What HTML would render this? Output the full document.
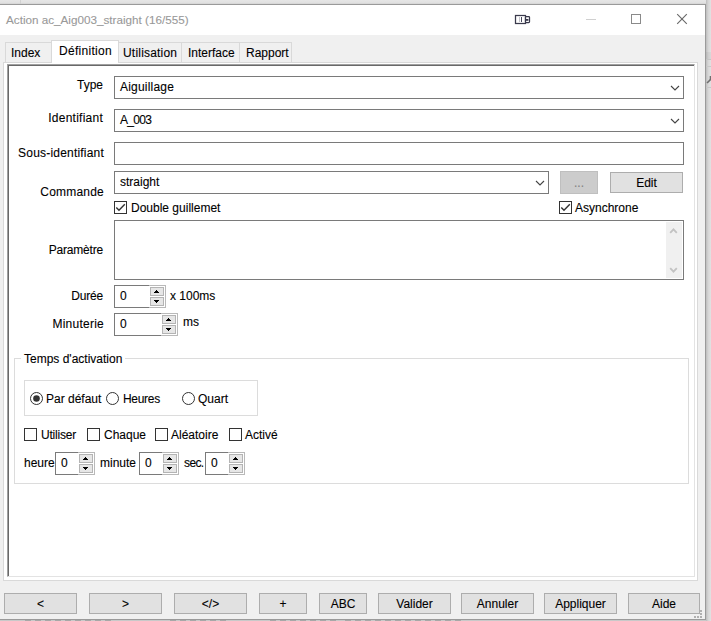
<!DOCTYPE html>
<html><head><meta charset="utf-8">
<style>
*{box-sizing:border-box;margin:0;padding:0}
html,body{width:711px;height:621px;overflow:hidden;background:#e6e6e6}
body{position:relative;font-family:"Liberation Sans",sans-serif;font-size:12px;color:#000}
.a{position:absolute}
.t{position:absolute;white-space:nowrap;line-height:14px;height:14px;-webkit-text-stroke:0.1px currentColor}
.r{text-align:right}
</style></head><body>
<div class="a" style="left:0;top:0;width:711px;height:4px;background:linear-gradient(to bottom,#e6e6e6,#e2e2e2 60%,#d4d4d4)"></div>
<div class="a" style="left:20px;top:0px;width:1px;height:4px;background:#d2d2d2;"></div>
<div class="a" style="left:706px;top:0;width:5px;height:621px;background:linear-gradient(to right,#bdbdbd,#d6d6d6 45%,#e2e2e2)"></div>
<div class="a" style="left:706px;top:52px;width:5px;height:7px;background:rgba(0,0,0,0.04);"></div>
<div class="a" style="left:706px;top:59px;width:5px;height:1px;background:#c4c4c4;"></div>
<div class="a" style="left:706px;top:66px;width:5px;height:1px;background:#c8c8c8;"></div>
<div class="a" style="left:706px;top:87px;width:5px;height:1px;background:#c8c8c8;"></div>
<svg class="a" style="left:706px;top:72px" width="5" height="13" viewBox="0 0 5 13"><path d="M1 11L5 7" stroke="#707070" stroke-width="1.6" fill="none"/><path d="M4.5 4V8" stroke="#707070" stroke-width="1.6"/></svg>
<div class="a" style="left:0px;top:620px;width:706px;height:1px;background:#c9c9c9;"></div>
<div class="a" style="left:25px;top:620px;width:6px;height:1px;background:#a8a8a8;"></div>
<div class="a" style="left:35px;top:620px;width:6px;height:1px;background:#a8a8a8;"></div>
<div class="a" style="left:45px;top:620px;width:6px;height:1px;background:#a8a8a8;"></div>
<div class="a" style="left:55px;top:620px;width:6px;height:1px;background:#a8a8a8;"></div>
<div class="a" style="left:65px;top:620px;width:6px;height:1px;background:#a8a8a8;"></div>
<div class="a" style="left:75px;top:620px;width:6px;height:1px;background:#a8a8a8;"></div>
<div class="a" style="left:85px;top:620px;width:6px;height:1px;background:#a8a8a8;"></div>
<div class="a" style="left:95px;top:620px;width:6px;height:1px;background:#a8a8a8;"></div>
<div class="a" style="left:105px;top:620px;width:6px;height:1px;background:#a8a8a8;"></div>
<div class="a" style="left:170px;top:620px;width:6px;height:1px;background:#a8a8a8;"></div>
<div class="a" style="left:180px;top:620px;width:6px;height:1px;background:#a8a8a8;"></div>
<div class="a" style="left:190px;top:620px;width:6px;height:1px;background:#a8a8a8;"></div>
<div class="a" style="left:200px;top:620px;width:6px;height:1px;background:#a8a8a8;"></div>
<div class="a" style="left:210px;top:620px;width:6px;height:1px;background:#a8a8a8;"></div>
<div class="a" style="left:220px;top:620px;width:6px;height:1px;background:#a8a8a8;"></div>
<div class="a" style="left:270px;top:620px;width:6px;height:1px;background:#a8a8a8;"></div>
<div class="a" style="left:280px;top:620px;width:6px;height:1px;background:#a8a8a8;"></div>
<div class="a" style="left:290px;top:620px;width:6px;height:1px;background:#a8a8a8;"></div>
<div class="a" style="left:300px;top:620px;width:6px;height:1px;background:#a8a8a8;"></div>
<div class="a" style="left:310px;top:620px;width:6px;height:1px;background:#a8a8a8;"></div>
<div class="a" style="left:320px;top:620px;width:6px;height:1px;background:#a8a8a8;"></div>
<div class="a" style="left:330px;top:620px;width:6px;height:1px;background:#a8a8a8;"></div>
<div class="a" style="left:345px;top:620px;width:6px;height:1px;background:#a8a8a8;"></div>
<div class="a" style="left:355px;top:620px;width:6px;height:1px;background:#a8a8a8;"></div>
<div class="a" style="left:365px;top:620px;width:6px;height:1px;background:#a8a8a8;"></div>
<div class="a" style="left:375px;top:620px;width:6px;height:1px;background:#a8a8a8;"></div>
<div class="a" style="left:385px;top:620px;width:6px;height:1px;background:#a8a8a8;"></div>
<div class="a" style="left:395px;top:620px;width:6px;height:1px;background:#a8a8a8;"></div>
<div class="a" style="left:405px;top:620px;width:6px;height:1px;background:#a8a8a8;"></div>
<div class="a" style="left:415px;top:620px;width:6px;height:1px;background:#a8a8a8;"></div>
<div class="a" style="left:425px;top:620px;width:6px;height:1px;background:#a8a8a8;"></div>
<div class="a" style="left:435px;top:620px;width:6px;height:1px;background:#a8a8a8;"></div>
<div class="a" style="left:445px;top:620px;width:6px;height:1px;background:#a8a8a8;"></div>
<div class="a" style="left:455px;top:620px;width:6px;height:1px;background:#a8a8a8;"></div>
<div class="a" style="left:0;top:4px;width:706px;height:616px;background:#f0f0f0;border-top:1px solid #9a9a9a;border-right:1px solid #9a9a9a;border-bottom:1px solid #9a9a9a"></div>
<div class="a" style="left:0px;top:5px;width:705px;height:30px;background:#fff;"></div>
<div class="t" style="left:6px;top:13px;color:#999;font-size:11.7px">Action ac_Aig003_straight (16/555)</div>
<svg class="a" style="left:512px;top:12px" width="22" height="14" viewBox="0 0 22 14">
 <rect x="3.5" y="3.5" width="10" height="8" fill="#fff" stroke="#3a3a4c" stroke-width="1.25"/>
 <line x1="7.5" y1="5" x2="7.5" y2="10" stroke="#c4c4cc" stroke-width="1"/>
 <line x1="9.5" y1="5" x2="9.5" y2="10" stroke="#4a4a5e" stroke-width="1"/>
 <rect x="13.5" y="4.5" width="4" height="6" rx="0.8" fill="#fff" stroke="#3a3a4c" stroke-width="1.25"/>
 <rect x="13" y="7" width="3.4" height="1.8" fill="#3a3a4c"/>
</svg>
<div class="a" style="left:586px;top:19px;width:10px;height:1px;background:#d0d0d0;"></div>
<div class="a" style="left:631px;top:14px;width:10px;height:10px;background:transparent;border:1px solid #8a8a8a;"></div>
<svg class="a" style="left:676px;top:13px" width="12" height="12" viewBox="0 0 12 12"><path d="M1.2 1.2L10.8 10.8M10.8 1.2L1.2 10.8" stroke="#6a6a6a" stroke-width="1.15" fill="none"/></svg>
<div class="a" style="left:5px;top:42px;width:47px;height:21px;background:#f0f0f0;border:1px solid #d9d9d9;border-bottom:none"></div>
<div class="t" style="left:11px;top:46px;letter-spacing:0px">Index</div>
<div class="a" style="left:118px;top:42px;width:64px;height:21px;background:#f0f0f0;border:1px solid #d9d9d9;border-bottom:none"></div>
<div class="t" style="left:123px;top:46px;letter-spacing:0.2px">Utilisation</div>
<div class="a" style="left:181px;top:42px;width:59px;height:21px;background:#f0f0f0;border:1px solid #d9d9d9;border-bottom:none"></div>
<div class="t" style="left:188px;top:46px;letter-spacing:0px">Interface</div>
<div class="a" style="left:239px;top:42px;width:53px;height:21px;background:#f0f0f0;border:1px solid #d9d9d9;border-bottom:none"></div>
<div class="t" style="left:246px;top:46px;letter-spacing:0px">Rapport</div>
<div class="a" style="left:3px;top:62px;width:695px;height:519px;background:#fff;border:1px solid #d9d9d9;"></div>
<div class="a" style="left:51px;top:40px;width:68px;height:23px;background:#fff;border:1px solid #d9d9d9;border-bottom:none"></div>
<div class="a" style="left:52px;top:62px;width:66px;height:2px;background:#fff;"></div>
<div class="t" style="left:59px;top:44px;letter-spacing:0.3px">Définition</div>
<div class="a" style="left:7px;top:64px;width:688px;height:513px;background:#fff;border-top:1px solid #a0a0a0;border-left:1px solid #a0a0a0;border-right:1px solid #e3e3e3;border-bottom:1px solid #e3e3e3;box-shadow:inset 1px 1px 0 #696969"></div>
<div class="t r" style="left:0;width:103px;top:78px;">Type</div>
<div class="t r" style="left:0;width:103px;top:111px;letter-spacing:0.25px">Identifiant</div>
<div class="t r" style="left:0;width:104px;top:146px;letter-spacing:0.2px">Sous-identifiant</div>
<div class="t r" style="left:0;width:104px;top:185px;letter-spacing:0.2px">Commande</div>
<div class="t r" style="left:0;width:103px;top:243px;letter-spacing:-0.2px">Paramètre</div>
<div class="t r" style="left:0;width:103px;top:289px;letter-spacing:-0.2px">Durée</div>
<div class="t r" style="left:0;width:104px;top:317px;letter-spacing:0.25px">Minuterie</div>
<div class="a" style="left:114px;top:76px;width:570px;height:23px;background:#fff;border:1px solid #7a7a7a;"></div>
<div class="t" style="left:120px;top:80px;letter-spacing:0.2px">Aiguillage</div>
<svg class="a" style="left:670px;top:85px" width="10" height="6" viewBox="0 0 10 6"><path d="M1 1L5 5L9 1" stroke="#444" stroke-width="1.1" fill="none"/></svg>
<div class="a" style="left:114px;top:109px;width:570px;height:23px;background:#fff;border:1px solid #7a7a7a;"></div>
<div class="t" style="left:120px;top:113px;letter-spacing:-0.7px">A_003</div>
<svg class="a" style="left:670px;top:118px" width="10" height="6" viewBox="0 0 10 6"><path d="M1 1L5 5L9 1" stroke="#444" stroke-width="1.1" fill="none"/></svg>
<div class="a" style="left:114px;top:142px;width:570px;height:23px;background:#fff;border:1px solid #7a7a7a;"></div>
<div class="a" style="left:114px;top:171px;width:435px;height:23px;background:#fff;border:1px solid #7a7a7a;"></div>
<div class="t" style="left:120px;top:175px;">straight</div>
<svg class="a" style="left:535px;top:180px" width="10" height="6" viewBox="0 0 10 6"><path d="M1 1L5 5L9 1" stroke="#444" stroke-width="1.1" fill="none"/></svg>
<div class="a" style="left:560px;top:171px;width:38px;height:23px;background:#cccccc;border:1px solid #bfbfbf;"></div>
<div class="t" style="left:560px;width:38px;text-align:center;top:176px;color:#838383">...</div>
<div class="a" style="left:610px;top:172px;width:73px;height:21px;background:#e1e1e1;border:1px solid #adadad;"></div>
<div class="t" style="left:610px;width:73px;text-align:center;top:176px;color:#000">Edit</div>
<div class="a" style="left:114px;top:201px;width:13px;height:13px;background:#fff;border:1px solid #333;"></div>
<svg class="a" style="left:114px;top:201px" width="13" height="13" viewBox="0 0 13 13"><path d="M2.3 6.4L5 9.2L10.8 3.3" stroke="#333" stroke-width="1.4" fill="none"/></svg>
<div class="t" style="left:131px;top:201px;">Double guillemet</div>
<div class="a" style="left:559px;top:201px;width:13px;height:13px;background:#fff;border:1px solid #333;"></div>
<svg class="a" style="left:559px;top:201px" width="13" height="13" viewBox="0 0 13 13"><path d="M2.3 6.4L5 9.2L10.8 3.3" stroke="#333" stroke-width="1.4" fill="none"/></svg>
<div class="t" style="left:575px;top:201px;">Asynchrone</div>
<div class="a" style="left:114px;top:220px;width:570px;height:60px;background:#fff;border:1px solid #7a7a7a;"></div>
<div class="a" style="left:666px;top:222px;width:16px;height:56px;background:#f0f0f0;"></div>
<svg class="a" style="left:669px;top:227px" width="9" height="8" viewBox="0 0 9 8"><path d="M1.2 5.8L4.5 2.4L7.8 5.8" stroke="#c2c2c2" stroke-width="1.8" fill="none"/></svg>
<svg class="a" style="left:669px;top:266px" width="9" height="8" viewBox="0 0 9 8"><path d="M1.2 2.2L4.5 5.6L7.8 2.2" stroke="#c2c2c2" stroke-width="1.8" fill="none"/></svg>
<div class="a" style="left:114px;top:285px;width:52px;height:23px;background:#fff;border:1px solid #b9b9b9"></div>
<div class="a" style="left:114px;top:285px;width:35px;height:1px;background:#7a7a7a"></div>
<div class="a" style="left:114px;top:307px;width:35px;height:1px;background:#7a7a7a"></div>
<div class="a" style="left:114px;top:285px;width:1px;height:23px;background:#7a7a7a"></div>
<div class="a" style="left:150px;top:287px;width:14px;height:9px;background:#e6e6e6;border:1px solid #b4b4b4"></div>
<div class="a" style="left:156px;top:290px;width:1px;height:1px;background:#000"></div>
<div class="a" style="left:155px;top:291px;width:3px;height:1px;background:#000"></div>
<div class="a" style="left:154px;top:292px;width:5px;height:1px;background:#000"></div>
<div class="a" style="left:150px;top:297px;width:14px;height:9px;background:#e6e6e6;border:1px solid #b4b4b4"></div>
<div class="a" style="left:154px;top:300px;width:5px;height:1px;background:#000"></div>
<div class="a" style="left:155px;top:301px;width:3px;height:1px;background:#000"></div>
<div class="a" style="left:156px;top:302px;width:1px;height:1px;background:#000"></div>
<div class="t" style="left:120px;top:289px">0</div>
<div class="t" style="left:170px;top:289px;">x 100ms</div>
<div class="a" style="left:114px;top:313px;width:64px;height:23px;background:#fff;border:1px solid #b9b9b9"></div>
<div class="a" style="left:114px;top:313px;width:47px;height:1px;background:#7a7a7a"></div>
<div class="a" style="left:114px;top:335px;width:47px;height:1px;background:#7a7a7a"></div>
<div class="a" style="left:114px;top:313px;width:1px;height:23px;background:#7a7a7a"></div>
<div class="a" style="left:162px;top:315px;width:14px;height:9px;background:#e6e6e6;border:1px solid #b4b4b4"></div>
<div class="a" style="left:168px;top:318px;width:1px;height:1px;background:#000"></div>
<div class="a" style="left:167px;top:319px;width:3px;height:1px;background:#000"></div>
<div class="a" style="left:166px;top:320px;width:5px;height:1px;background:#000"></div>
<div class="a" style="left:162px;top:325px;width:14px;height:9px;background:#e6e6e6;border:1px solid #b4b4b4"></div>
<div class="a" style="left:166px;top:328px;width:5px;height:1px;background:#000"></div>
<div class="a" style="left:167px;top:329px;width:3px;height:1px;background:#000"></div>
<div class="a" style="left:168px;top:330px;width:1px;height:1px;background:#000"></div>
<div class="t" style="left:120px;top:317px">0</div>
<div class="t" style="left:183px;top:315px;">ms</div>
<div class="a" style="left:14px;top:358px;width:675px;height:126px;background:transparent;border:1px solid #dcdcdc;"></div>
<div class="t" style="left:21px;top:352px;background:#fff;padding:0 3px">Temps d'activation</div>
<div class="a" style="left:24px;top:380px;width:234px;height:36px;background:transparent;border:1px solid #dcdcdc;"></div>
<svg class="a" style="left:30px;top:392px" width="13" height="13" viewBox="0 0 13 13"><circle cx="6.5" cy="6.5" r="6" fill="#fff" stroke="#333" stroke-width="1"/><circle cx="6.5" cy="6.5" r="3.3" fill="#333"/></svg>
<div class="t" style="left:46px;top:392px;">Par défaut</div>
<svg class="a" style="left:106px;top:392px" width="13" height="13" viewBox="0 0 13 13"><circle cx="6.5" cy="6.5" r="6" fill="#fff" stroke="#333" stroke-width="1"/></svg>
<div class="t" style="left:123px;top:392px;letter-spacing:-0.3px">Heures</div>
<svg class="a" style="left:182px;top:392px" width="13" height="13" viewBox="0 0 13 13"><circle cx="6.5" cy="6.5" r="6" fill="#fff" stroke="#333" stroke-width="1"/></svg>
<div class="t" style="left:198px;top:392px;">Quart</div>
<div class="a" style="left:24px;top:428px;width:13px;height:13px;background:#fff;border:1px solid #333;"></div>
<div class="t" style="left:41px;top:428px;letter-spacing:-0.2px">Utiliser</div>
<div class="a" style="left:87px;top:428px;width:13px;height:13px;background:#fff;border:1px solid #333;"></div>
<div class="t" style="left:104px;top:428px;">Chaque</div>
<div class="a" style="left:155px;top:428px;width:13px;height:13px;background:#fff;border:1px solid #333;"></div>
<div class="t" style="left:171px;top:428px;">Aléatoire</div>
<div class="a" style="left:229px;top:428px;width:13px;height:13px;background:#fff;border:1px solid #333;"></div>
<div class="t" style="left:245px;top:428px;">Activé</div>
<div class="t" style="left:24px;top:456px;">heure</div>
<div class="a" style="left:55px;top:452px;width:40px;height:23px;background:#fff;border:1px solid #b9b9b9"></div>
<div class="a" style="left:55px;top:452px;width:23px;height:1px;background:#7a7a7a"></div>
<div class="a" style="left:55px;top:474px;width:23px;height:1px;background:#7a7a7a"></div>
<div class="a" style="left:55px;top:452px;width:1px;height:23px;background:#7a7a7a"></div>
<div class="a" style="left:79px;top:454px;width:14px;height:9px;background:#e6e6e6;border:1px solid #b4b4b4"></div>
<div class="a" style="left:85px;top:457px;width:1px;height:1px;background:#000"></div>
<div class="a" style="left:84px;top:458px;width:3px;height:1px;background:#000"></div>
<div class="a" style="left:83px;top:459px;width:5px;height:1px;background:#000"></div>
<div class="a" style="left:79px;top:464px;width:14px;height:9px;background:#e6e6e6;border:1px solid #b4b4b4"></div>
<div class="a" style="left:83px;top:467px;width:5px;height:1px;background:#000"></div>
<div class="a" style="left:84px;top:468px;width:3px;height:1px;background:#000"></div>
<div class="a" style="left:85px;top:469px;width:1px;height:1px;background:#000"></div>
<div class="t" style="left:61px;top:456px">0</div>
<div class="t" style="left:100px;top:456px;">minute</div>
<div class="a" style="left:139px;top:452px;width:40px;height:23px;background:#fff;border:1px solid #b9b9b9"></div>
<div class="a" style="left:139px;top:452px;width:23px;height:1px;background:#7a7a7a"></div>
<div class="a" style="left:139px;top:474px;width:23px;height:1px;background:#7a7a7a"></div>
<div class="a" style="left:139px;top:452px;width:1px;height:23px;background:#7a7a7a"></div>
<div class="a" style="left:163px;top:454px;width:14px;height:9px;background:#e6e6e6;border:1px solid #b4b4b4"></div>
<div class="a" style="left:169px;top:457px;width:1px;height:1px;background:#000"></div>
<div class="a" style="left:168px;top:458px;width:3px;height:1px;background:#000"></div>
<div class="a" style="left:167px;top:459px;width:5px;height:1px;background:#000"></div>
<div class="a" style="left:163px;top:464px;width:14px;height:9px;background:#e6e6e6;border:1px solid #b4b4b4"></div>
<div class="a" style="left:167px;top:467px;width:5px;height:1px;background:#000"></div>
<div class="a" style="left:168px;top:468px;width:3px;height:1px;background:#000"></div>
<div class="a" style="left:169px;top:469px;width:1px;height:1px;background:#000"></div>
<div class="t" style="left:145px;top:456px">0</div>
<div class="t" style="left:184px;top:456px;letter-spacing:-0.6px">sec.</div>
<div class="a" style="left:205px;top:452px;width:40px;height:23px;background:#fff;border:1px solid #b9b9b9"></div>
<div class="a" style="left:205px;top:452px;width:23px;height:1px;background:#7a7a7a"></div>
<div class="a" style="left:205px;top:474px;width:23px;height:1px;background:#7a7a7a"></div>
<div class="a" style="left:205px;top:452px;width:1px;height:23px;background:#7a7a7a"></div>
<div class="a" style="left:229px;top:454px;width:14px;height:9px;background:#e6e6e6;border:1px solid #b4b4b4"></div>
<div class="a" style="left:235px;top:457px;width:1px;height:1px;background:#000"></div>
<div class="a" style="left:234px;top:458px;width:3px;height:1px;background:#000"></div>
<div class="a" style="left:233px;top:459px;width:5px;height:1px;background:#000"></div>
<div class="a" style="left:229px;top:464px;width:14px;height:9px;background:#e6e6e6;border:1px solid #b4b4b4"></div>
<div class="a" style="left:233px;top:467px;width:5px;height:1px;background:#000"></div>
<div class="a" style="left:234px;top:468px;width:3px;height:1px;background:#000"></div>
<div class="a" style="left:235px;top:469px;width:1px;height:1px;background:#000"></div>
<div class="t" style="left:211px;top:456px">0</div>
<div class="a" style="left:4px;top:593px;width:73px;height:21px;background:#e1e1e1;border:1px solid #adadad;"></div>
<div class="t" style="left:4px;width:73px;text-align:center;top:597px;color:#000">&lt;</div>
<div class="a" style="left:89px;top:593px;width:73px;height:21px;background:#e1e1e1;border:1px solid #adadad;"></div>
<div class="t" style="left:89px;width:73px;text-align:center;top:597px;color:#000">&gt;</div>
<div class="a" style="left:174px;top:593px;width:73px;height:21px;background:#e1e1e1;border:1px solid #adadad;"></div>
<div class="t" style="left:174px;width:73px;text-align:center;top:597px;color:#000">&lt;/&gt;</div>
<div class="a" style="left:259px;top:593px;width:48px;height:21px;background:#e1e1e1;border:1px solid #adadad;"></div>
<div class="t" style="left:259px;width:48px;text-align:center;top:597px;color:#000">+</div>
<div class="a" style="left:319px;top:593px;width:48px;height:21px;background:#e1e1e1;border:1px solid #adadad;"></div>
<div class="t" style="left:319px;width:48px;text-align:center;top:597px;color:#000">ABC</div>
<div class="a" style="left:378px;top:593px;width:73px;height:21px;background:#e1e1e1;border:1px solid #adadad;"></div>
<div class="t" style="left:378px;width:73px;text-align:center;top:597px;color:#000">Valider</div>
<div class="a" style="left:461px;top:593px;width:73px;height:21px;background:#e1e1e1;border:1px solid #adadad;"></div>
<div class="t" style="left:461px;width:73px;text-align:center;top:597px;color:#000">Annuler</div>
<div class="a" style="left:544px;top:593px;width:73px;height:21px;background:#e1e1e1;border:1px solid #adadad;"></div>
<div class="t" style="left:544px;width:73px;text-align:center;top:597px;color:#000">Appliquer</div>
<div class="a" style="left:628px;top:593px;width:72px;height:21px;background:#e1e1e1;border:1px solid #adadad;"></div>
<div class="t" style="left:628px;width:72px;text-align:center;top:597px;color:#000">Aide</div>
<div class="a" style="left:694px;top:616px;width:2px;height:2px;background:#b0b0b0;"></div>
<div class="a" style="left:697px;top:616px;width:2px;height:2px;background:#b0b0b0;"></div>
<div class="a" style="left:700px;top:616px;width:2px;height:2px;background:#b0b0b0;"></div>
<div class="a" style="left:700px;top:613px;width:2px;height:2px;background:#b0b0b0;"></div>
<div class="a" style="left:700px;top:610px;width:2px;height:2px;background:#b0b0b0;"></div>
</body></html>
